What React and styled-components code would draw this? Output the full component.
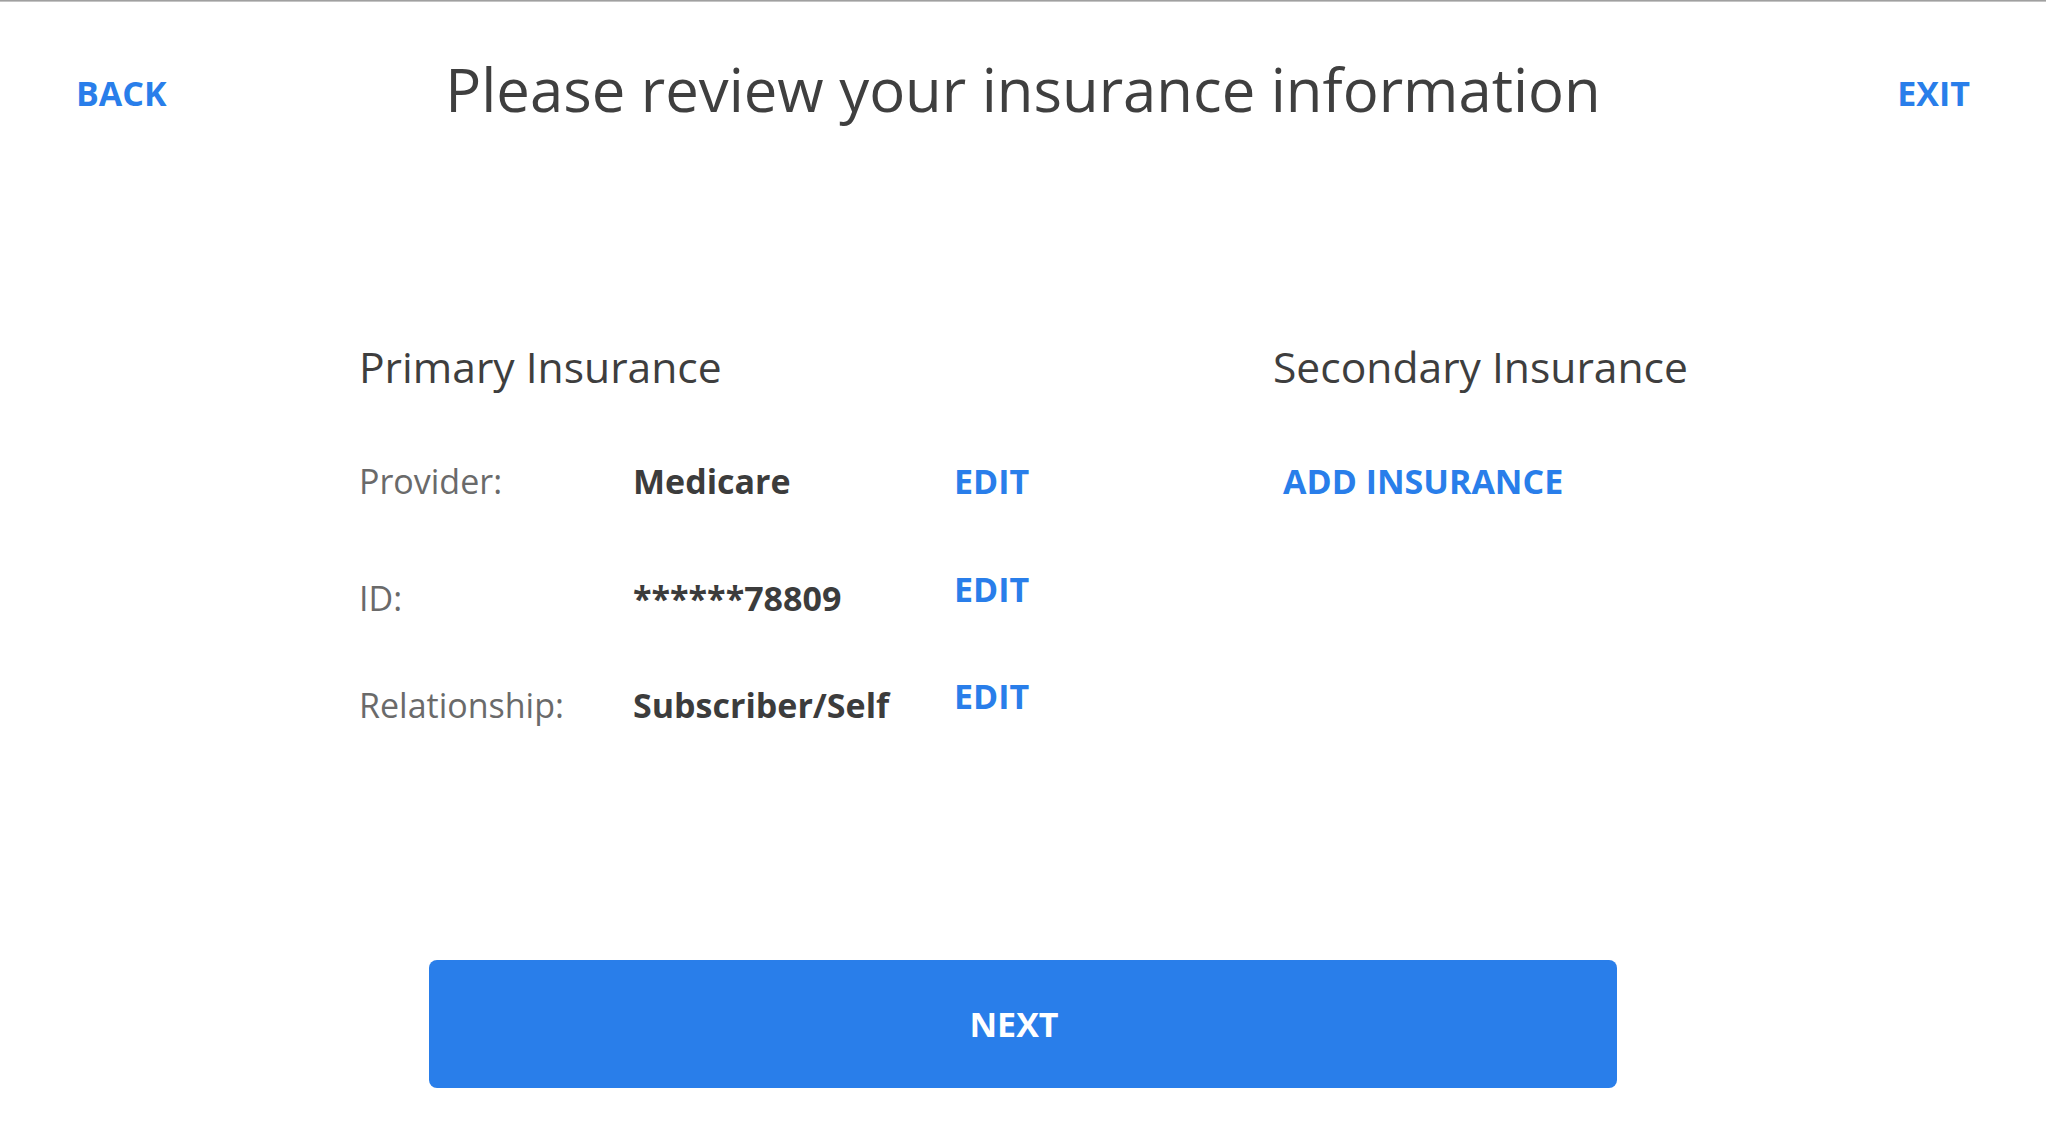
import React from 'react';
import styled, { createGlobalStyle } from 'styled-components';

const GlobalStyle = createGlobalStyle`
  html, body {
    margin: 0;
    padding: 0;
    background: #ffffff;
  }
  body {
    font-family: "Open Sans", "Liberation Sans", sans-serif;
    color: #3e3e3e;
  }
`;

const BLUE = '#297eea';

const Page = styled.div`
  display: flex;
  flex-direction: column;
  min-height: 1142px;
`;

const TopLine = styled.div`
  height: 2px;
  background: linear-gradient(#8e8e8e, #d6d6d6);
`;

const Header = styled.header`
  display: grid;
  grid-template-columns: 1fr auto 1fr;
  align-items: start;
  padding: 57px 76px 0;
`;

const NavLink = styled.a`
  justify-self: ${({ align }) => align};
  margin-top: 17px;
  font-size: 34px;
  line-height: 34px;
  font-weight: 700;
  color: ${BLUE};
  text-decoration: none;
  cursor: pointer;
`;

const Title = styled.h1`
  margin: 0;
  font-size: 59.8px;
  line-height: 60px;
  font-weight: 400;
  color: #3f3f3f;
  white-space: nowrap;
`;

const Content = styled.main`
  width: 1328px;
  margin: 226px auto 0;
  display: grid;
  grid-template-columns: 914px 1fr;
`;

const Column = styled.section`
  display: flex;
  flex-direction: column;
  align-items: flex-start;
`;

const SectionTitle = styled.h2`
  margin: 0;
  font-size: 42.6px;
  line-height: 42px;
  font-weight: 400;
  color: #3e3e3e;
  white-space: nowrap;
`;

const Row = styled.div`
  display: grid;
  grid-template-columns: 274px 311px auto;
  align-items: start;
  margin-top: ${({ spacing }) => spacing}px;
`;

const Label = styled.span`
  font-size: 34px;
  line-height: 34px;
  color: #6a6a6a;
`;

const Value = styled.span`
  font-size: 34px;
  line-height: 34px;
  font-weight: 700;
  color: #3c3c3c;
  white-space: nowrap;
`;

const TextButton = styled.button`
  margin: ${({ raise }) => (raise ? `-${raise}px` : '0')} 0 0 0;
  padding: 0 10px;
  border: none;
  background: none;
  font-family: inherit;
  font-size: 34px;
  line-height: 34px;
  font-weight: 700;
  color: ${BLUE};
  white-space: nowrap;
  cursor: pointer;
`;

const AddButton = styled(TextButton)`
  margin: 77px 0 0 0;
`;

const NextButton = styled.button`
  display: block;
  width: 1188px;
  height: 128px;
  margin: 238px auto 0;
  padding: 0 18px 0 0;
  border: none;
  border-radius: 8px;
  background: ${BLUE};
  color: #ffffff;
  font-family: inherit;
  font-size: 34px;
  font-weight: 700;
  cursor: pointer;
`;

const primaryRows = [
  { label: 'Provider:', value: 'Medicare', spacing: 77, raise: 0 },
  { label: 'ID:', value: '******78809', spacing: 83, raise: 9 },
  { label: 'Relationship:', value: 'Subscriber/Self', spacing: 73, raise: 9 },
];

export default function App() {
  return (
    <>
      <GlobalStyle />
      <Page>
        <TopLine />
        <Header>
          <NavLink align="start">BACK</NavLink>
          <Title>Please review your insurance information</Title>
          <NavLink align="end">EXIT</NavLink>
        </Header>

        <Content>
          <Column>
            <SectionTitle>Primary Insurance</SectionTitle>
            {primaryRows.map(row => (
              <Row key={row.label} spacing={row.spacing}>
                <Label>{row.label}</Label>
                <Value>{row.value}</Value>
                <TextButton raise={row.raise}>EDIT</TextButton>
              </Row>
            ))}
          </Column>

          <Column>
            <SectionTitle>Secondary Insurance</SectionTitle>
            <AddButton>ADD INSURANCE</AddButton>
          </Column>
        </Content>

        <NextButton>NEXT</NextButton>
      </Page>
    </>
  );
}
